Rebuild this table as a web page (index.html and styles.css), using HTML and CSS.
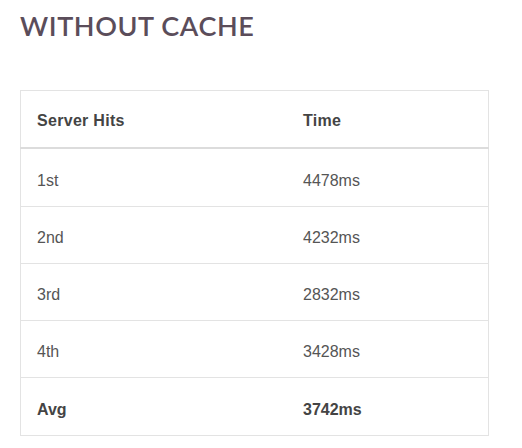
FILE: index.html
```html
<!DOCTYPE html>
<html>
<head>
<meta charset="utf-8">
<link rel="stylesheet" href="styles.css">
</head>
<body>
<div class="page">
  <h2 class="title">WITHOUT CACHE</h2>
  <table class="results">
    <thead>
      <tr><th class="col-hits">Server Hits</th><th>Time</th></tr>
    </thead>
    <tbody>
      <tr class="first"><td>1st</td><td>4478ms</td></tr>
      <tr><td>2nd</td><td>4232ms</td></tr>
      <tr><td>3rd</td><td>2832ms</td></tr>
      <tr><td>4th</td><td>3428ms</td></tr>
      <tr class="avg"><td>Avg</td><td>3742ms</td></tr>
    </tbody>
  </table>
</div>
</body>
</html>
```

FILE: styles.css
```css
html, body {
  margin: 0;
  padding: 0;
  background: #fff;
}
.page {
  padding: 8px 20px 0 20px;
  width: 469px;
}
.title {
  margin: 0 0 46px 0;
  font-family: Lato, "Open Sans", sans-serif;
  font-weight: 600;
  font-size: 27px;
  line-height: 36px;
  letter-spacing: 0.6px;
  color: #5b4d5a;
}
.results {
  width: 469px;
  border-collapse: collapse;
  border: 1px solid #e3e3e3;
  font-family: "Liberation Sans", Arial, sans-serif;
  font-size: 16px;
  color: #555;
}
.results th {
  text-align: left;
  font-weight: 700;
  color: #444;
  letter-spacing: 0.3px;
  height: 53px;
  padding: 3px 16px 0 16px;
  border-bottom: 2px solid #dcdcdc;
}
.results .col-hits {
  width: 234px;
}
.results td {
  height: 50px;
  padding: 6px 16px 0 16px;
  border-top: 1px solid #e3e3e3;
}
.results .first td {
  height: 51px;
}
.results .avg td {
  height: 51px;
  font-weight: 700;
  color: #444;
}
```
